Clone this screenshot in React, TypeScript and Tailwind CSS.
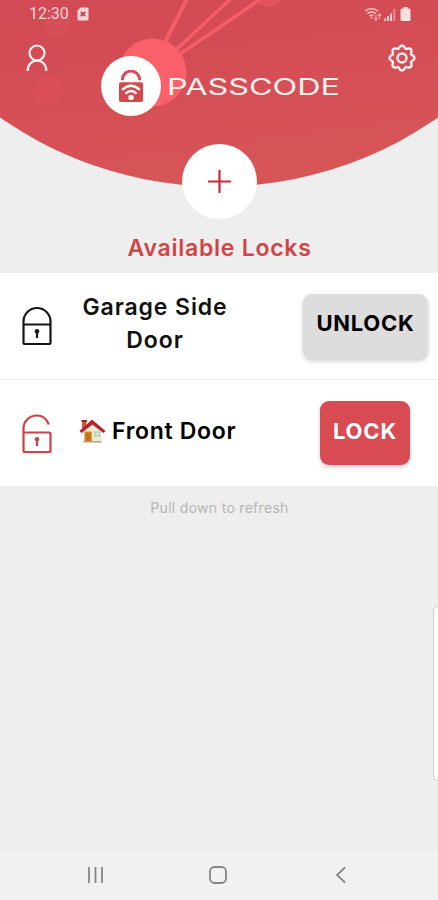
import React from "react";

const FONT = "font-['Inter','Open_Sans',sans-serif]";

function HeaderArt() {
  return (
    <svg className="absolute inset-0" width="438" height="190" viewBox="0 0 438 190" aria-hidden="true">
      <defs>
        <linearGradient id="hdr" x1="0" y1="0" x2="0.3" y2="1">
          <stop offset="0" stopColor="#d04954" />
          <stop offset="0.5" stopColor="#d54e56" />
          <stop offset="1" stopColor="#d75557" />
        </linearGradient>
        <clipPath id="dome">
          <circle cx="219" cy="-195.500" r="382" />
        </clipPath>
      </defs>
      <g clipPath="url(#dome)">
        <rect width="438" height="190" fill="url(#hdr)" />
        <circle cx="49" cy="91" r="15" fill="#da4f59" />
        <circle cx="58" cy="24" r="13" fill="#d54e58" />
        <circle cx="268" cy="-8" r="15" fill="#df545e" />
        <g stroke="#f35e68" fill="none">
          <path d="M165 42 188 -3" strokeWidth="4" />
          <path d="M177 49 224 5 240 -10" strokeWidth="3.6" />
          <path d="M180 54Q222 26 262 -2" strokeWidth="3.4" />
        </g>
        <circle cx="152.500" cy="72.500" r="34" fill="#fa606a" />
      </g>
    </svg>
  );
}

function StatusBar() {
  return (
    <div className="flex h-7 items-center pl-[29px] pr-[27px] text-[#fbd3d2]">
      <span className="font-['Roboto',sans-serif] text-[16px] leading-none">12:30</span>
      <svg className="ml-[8px]" width="12" height="14" viewBox="0 0 12 14">
        <path d="M3.5 0.5H10a1.5 1.5 0 0 1 1.5 1.5v10a1.5 1.5 0 0 1-1.5 1.5H2A1.5 1.5 0 0 1 .5 12V3.5z" fill="currentColor" />
        <path d="m3.7 4.8 4.6 4.4m0-4.4L3.7 9.2" stroke="#a8424c" strokeWidth="1.6" />
      </svg>
      <svg className="ml-auto" width="18" height="14" viewBox="0 0 18 14" fill="none" stroke="#f6b5b4">
        <path d="M1 4.2Q7.500-1 14 4.200M3.200 6.600Q7.500 3.200 11.800 6.600M5.300 8.900Q7.500 7.200 9.500 8.900" strokeWidth="1.600" />
        <path d="M6 10h3l-1.500 2z" fill="#f6b5b4" stroke="none" />
        <path d="M12 13V8m-1.700 3.300L12 13l1.600-1.700M15.500 12V7m-1.600 1.700L15.500 7l1.600 1.700" strokeWidth="1.100" />
      </svg>
      <svg className="ml-[2px]" width="12" height="13" viewBox="0 0 12 13">
        <path d="M0 10.500h2V13H0zM3 8h2v5H3zM6 5.500h2V13H6z" fill="#fbc9c8" />
        <path d="M9 1h2.500v12H9z" fill="#e68387" />
      </svg>
      <svg className="ml-[4px]" width="11" height="14" viewBox="0 0 11 14">
        <path d="M3.500 0h4v1.500H9A1.500 1.500 0 0 1 10.500 3v9.500A1.500 1.500 0 0 1 9 14H2A1.500 1.500 0 0 1 .5 12.500V3A1.500 1.500 0 0 1 2 1.500h1.500z" fill="#ffe0de" />
      </svg>
    </div>
  );
}

function UserIcon() {
  return (
    <svg width="22" height="28" viewBox="0 0 22 28" fill="none" stroke="#fff3f1" strokeWidth="2.200">
      <circle cx="11" cy="9" r="7.500" />
      <path d="M1.600 27C1.800 20.500 6 16.600 11 16.600S20.200 20.500 20.400 27" />
    </svg>
  );
}

function GearIcon() {
  return (
    <svg width="28" height="28" viewBox="0 0 28 28" fill="none" stroke="#fff1ef" strokeWidth="2.400" strokeLinejoin="round">
      <path d="M10.300 4.900C11.300 4.400 11.300 1.500 14 1.500S16.700 4.400 17.700 4.900C18.800 5.400 20.900 3.300 22.800 5.200S22.600 9.200 23.100 10.300C23.600 11.300 26.500 11.300 26.500 14S23.600 16.700 23.100 17.700C22.600 18.800 24.700 20.900 22.800 22.800S18.800 22.600 17.700 23.100C16.700 23.600 16.700 26.500 14 26.500S11.300 23.600 10.300 23.100C9.200 22.600 7.100 24.700 5.200 22.800S5.400 18.800 4.900 17.700C4.400 16.700 1.500 16.700 1.500 14S4.400 11.300 4.900 10.300C5.400 9.200 3.300 7.100 5.200 5.200S9.200 5.400 10.300 4.900Z" />
      <circle cx="14" cy="14" r="4.500" />
    </svg>
  );
}

function Logo() {
  return (
    <div className="mt-[12px] flex items-center">
      <div className="flex size-[60px] items-center justify-center rounded-full bg-white">
        <svg width="26" height="33" viewBox="0 0 27 34" fill="none">
          <path d="M4.500 10.500V10a9 9 0 0 1 18 0v.5" stroke="#d94c55" strokeWidth="3" />
          <rect x="1" y="12.500" width="25" height="20.500" rx="2" fill="#d64850" />
          <path d="M4.300 20.500Q13.500 12 22.700 20.500M7.700 24.500Q13.500 18.800 19.300 24.500" stroke="#fff" strokeWidth="2.400" />
          <circle cx="13.500" cy="28.300" r="2.800" fill="#fff" />
        </svg>
      </div>
      <svg className="ml-[5px]" width="178" height="32" viewBox="0 0 178 32">
        <text x="1" y="25" textLength="173" lengthAdjust="spacingAndGlyphs" className="font-['Inter',sans-serif] text-[23px] font-normal" fill="#fff0ee">PASSCODE</text>
      </svg>
    </div>
  );
}

function LockIcon({ open }: { open?: boolean }) {
  return (
    <svg className={open ? "mt-[2px]" : ""} width="30" height="40" viewBox="0 0 30 40" fill="none" stroke={open ? "#cf4149" : "#161616"} strokeWidth="2.200">
      <rect x="1.500" y="18.500" width="27" height="19.500" rx="1.500" />
      {open ? <path d="M1.500 19V14.500C1.500 7 7.500 1.500 15 1.500c5.500 0 9.600 3 11.800 9" /> : <path d="M1.500 19V15.500a13.500 13.500 0 0 1 27 0V19" />}
      <path d="M15 26v6" />
      <circle cx="15" cy="25.300" r="2.300" fill={open ? "#cf4149" : "#161616"} stroke="none" />
    </svg>
  );
}

function House() {
  return (
    <svg width="27" height="24" viewBox="0 0 27 24">
      <path d="M4.500 10 13 4l9.500 6v13h-18z" fill="#f1ead0" />
      <path d="M4.500 22h18v1.500h-18z" fill="#a9a88f" />
      <path d="M3 2h4.500v7H3z" fill="#c85a43" />
      <path d="M2.500 1h5.500v2h-5.500z" fill="#9e2922" />
      <path d="M13 .5 26.500 12 24.500 14 13.300 5.500 2.500 14 .5 12z" fill="#b8202a" />
      <path d="M5.500 12.500h7.300V23H5.500z" fill="#d28a22" />
      <path d="M7 14h4.300v7.500H7z" fill="#bd741c" />
      <path d="M15.200 12.500h6v5h-6z" fill="#9dc6b5" />
      <path d="M18.200 12.500v5m-3-2.500h6" stroke="#edf2df" />
    </svg>
  );
}

export default function App() {
  return (
    <div className={`flex h-[900px] w-[438px] flex-col overflow-hidden bg-[#eeeeee] ${FONT}`}>
      <header className="relative h-[233px]">
        <HeaderArt />
        <div className="relative">
          <StatusBar />
          <div className="flex items-start pt-4">
            <button className="ml-[26px]" aria-label="Account"><UserIcon /></button>
            <div className="ml-[53px]"><Logo /></div>
            <button className="ml-[44px]" aria-label="Settings"><GearIcon /></button>
          </div>
          <button aria-label="Add lock" className="mx-auto mt-[28px] flex size-[75px] items-center justify-center rounded-full bg-white">
            <svg width="25" height="25" viewBox="0 0 25 25" stroke="#c92b3d" strokeWidth="2.200">
              <path d="M12.500 1v23M1 12.500h23" />
            </svg>
          </button>
        </div>
      </header>

      <h1 className="flex h-10 items-start justify-center pt-px pl-px text-[23px] leading-[29px] font-semibold tracking-[0.75px] text-[#d24448]">Available Locks</h1>

      <main>
        <section className="flex h-[107px] items-center border-b border-[#ececec] bg-white pl-[22px] pr-[10px]">
          <LockIcon />
          <h2 className="ml-[22px] w-[162px] pb-[4px] text-center text-[23px] leading-[33px] font-semibold tracking-[0.9px] text-[#111111]">Garage Side Door</h2>
          <button className="ml-auto flex h-[65px] w-[125px] items-center justify-center rounded-[9px] bg-[#dddddd] pb-[5px] text-[22px] font-bold tracking-[0.7px] text-black shadow-[0_2px_4px_rgba(0,0,0,0.2)]">UNLOCK</button>
        </section>
        <section className="flex h-[106px] items-center bg-white pl-[22px] pr-[28px]">
          <LockIcon open />
          <h2 className="ml-[27px] flex items-center gap-[6px] pb-[4px] text-[23px] leading-[33px] font-semibold tracking-[0.7px] whitespace-nowrap text-black"><House />Front Door</h2>
          <button className="ml-auto flex h-[64px] w-[90px] items-center justify-center rounded-[9px] bg-[#d94b53] pb-[3px] text-[22px] font-bold tracking-[0.8px] text-white shadow-[0_2px_4px_rgba(0,0,0,0.2)]">LOCK</button>
        </section>
        <p className="pt-[12px] pl-px text-center text-[14px] leading-5 tracking-[0.3px] text-[#b5b5b5]">Pull down to refresh</p>
      </main>

      <div className="mt-[88px] ml-auto h-[175px] w-[5px] rounded-l-[5px] border border-r-0 border-[#d0d0d0] bg-white" />

      <nav className="mt-auto flex h-[50px] items-center bg-[#f1f1f1] text-[#858585]">
        <svg className="ml-[87px]" width="18" height="18" viewBox="0 0 18 18" stroke="currentColor" strokeWidth="1.800">
          <path d="M2 1v16M8.500 1v16M15 1v16" />
        </svg>
        <svg className="ml-[104px]" width="18" height="18" viewBox="0 0 18 18" fill="none" stroke="currentColor" strokeWidth="1.800">
          <rect x="1" y="1" width="16" height="16" rx="4.500" />
        </svg>
        <svg className="ml-[108px]" width="12" height="18" viewBox="0 0 12 18" fill="none" stroke="currentColor" strokeWidth="1.800">
          <path d="M10 1.500 2 9l8 7.500" />
        </svg>
      </nav>
    </div>
  );
}
